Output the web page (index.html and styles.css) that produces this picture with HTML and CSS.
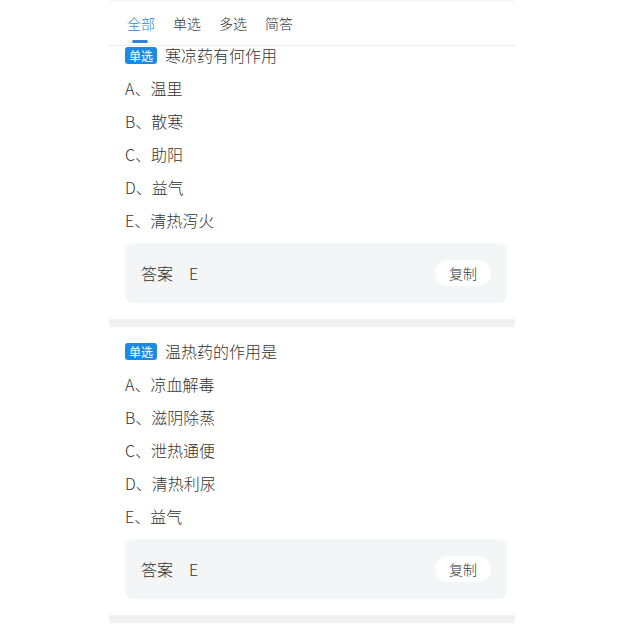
FILE: index.html
```html
<!DOCTYPE html>
<html lang="zh">
<head>
<meta charset="utf-8">
<link rel="stylesheet" href="styles.css">
</head>
<body>
<div class="page">
  <div class="tabs">
    <div class="tab active">全部</div>
    <div class="tab">单选</div>
    <div class="tab">多选</div>
    <div class="tab">简答</div>
  </div>
  <div class="list">
    <div class="card">
      <div class="row title"><span class="badge">单选</span><span>寒凉药有何作用</span></div>
      <div class="row">A、温里</div>
      <div class="row">B、散寒</div>
      <div class="row">C、助阳</div>
      <div class="row">D、益气</div>
      <div class="row">E、清热泻火</div>
      <div class="answer"><span class="label">答案</span><span class="value">E</span><span class="copy">复制</span></div>
    </div>
    <div class="sep"></div>
    <div class="card">
      <div class="row title"><span class="badge">单选</span><span>温热药的作用是</span></div>
      <div class="row">A、凉血解毒</div>
      <div class="row">B、滋阴除蒸</div>
      <div class="row">C、泄热通便</div>
      <div class="row">D、清热利尿</div>
      <div class="row">E、益气</div>
      <div class="answer"><span class="label">答案</span><span class="value">E</span><span class="copy">复制</span></div>
    </div>
    <div class="sep"></div>
    <div class="card"></div>
  </div>
</div>
</body>
</html>
```
FILE: styles.css
```css
html, body {
  margin: 0;
  padding: 0;
  background: #ffffff;
  overflow: hidden;
  height: 631px;
}
body {
  font-family: "Noto Sans CJK SC", "Noto Sans", sans-serif;
  font-weight: 300;
  color: #333333;
}
.page {
  margin-left: 109px;
  width: 406px;
  position: relative;
}
.tabs {
  position: fixed;
  top: 0;
  left: 109px;
  width: 406px;
  height: 46px;
  box-sizing: border-box;
  background: #ffffff;
  border-bottom: 1px solid #ececec;
  box-shadow: inset 0 2px 2px -1px rgba(0,0,0,0.06);
  display: flex;
  gap: 18px;
  padding-left: 18px;
  z-index: 2;
}
.tab {
  position: relative;
  font-size: 14px;
  line-height: 46px;
  height: 46px;
  color: #333;
}
.tab.active {
  color: #2d85dc;
}
.tab.active::after {
  content: "";
  position: absolute;
  left: 5px;
  right: 7px;
  top: 40px;
  height: 3px;
  border-radius: 2px;
  background: #2d85dc;
}
.list {
  padding-top: 31px;
}
.card {
  padding: 8px 8px 16px 16px;
}
.row {
  height: 33px;
  line-height: 33px;
  font-size: 16px;
  display: flex;
  align-items: center;
}
.title {
  gap: 8px;
}
.badge {
  background: #1e88e5;
  color: #fff;
  font-size: 12px;
  font-weight: 400;
  line-height: 17px;
  height: 17px;
  padding: 0 4px;
  border-radius: 3px;
}
.answer {
  margin-top: 6px;
  height: 60px;
  background: #f4f5f7;
  border-radius: 8px;
  display: flex;
  align-items: center;
  padding: 0 16px;
  font-size: 16px;
}
.label {
  margin-right: 16px;
}
.value {
  flex: 1;
}
.copy {
  background: #fff;
  border-radius: 13px;
  height: 26px;
  line-height: 26px;
  padding: 0 14px;
  font-size: 14px;
  color: #333;
}
.sep {
  height: 8px;
  background: #f2f2f2;
}
```
